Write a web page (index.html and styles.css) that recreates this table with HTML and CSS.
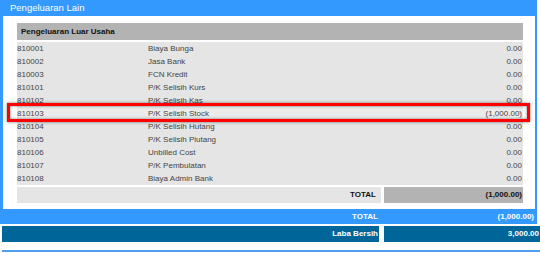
FILE: index.html
```html
<!DOCTYPE html>
<html lang="id">
<head>
    <meta charset="UTF-8">
    <meta name="viewport" content="width=device-width, initial-scale=1.0">
    <title>Laporan Laba Rugi | Pengeluaran Lain</title>
    <link rel="stylesheet" href="styles.css">
</head>
<body>
    <div class="panel">
        <div class="panel-heading">Pengeluaran Lain</div>
        <div class="panel-body">
            <div class="group-title">Pengeluaran Luar Usaha</div>
            <div class="acc-list">
                <div class="acc-row"><span>810001</span><span>Biaya Bunga</span><span class="amt">0.00</span></div>
                <div class="acc-row"><span>810002</span><span>Jasa Bank</span><span class="amt">0.00</span></div>
                <div class="acc-row"><span>810003</span><span>FCN Kredit</span><span class="amt">0.00</span></div>
                <div class="acc-row"><span>810101</span><span>P/K Selisih Kurs</span><span class="amt">0.00</span></div>
                <div class="acc-row"><span>810102</span><span>P/K Selisih Kas</span><span class="amt">0.00</span></div>
                <div class="acc-row marked"><span>810103</span><span>P/K Selisih Stock</span><span class="amt">(1,000.00)</span></div>
                <div class="acc-row"><span>810104</span><span>P/K Selisih Hutang</span><span class="amt">0.00</span></div>
                <div class="acc-row"><span>810105</span><span>P/K Selisih Piutang</span><span class="amt">0.00</span></div>
                <div class="acc-row"><span>810106</span><span>Unbilled Cost</span><span class="amt">0.00</span></div>
                <div class="acc-row"><span>810107</span><span>P/K Pembulatan</span><span class="amt">0.00</span></div>
                <div class="acc-row"><span>810108</span><span>Biaya Admin Bank</span><span class="amt">0.00</span></div>
            </div>
            <div class="group-total">
                <div class="label">TOTAL</div>
                <div class="value">(1,000.00)</div>
            </div>
        </div>
        <div class="band">
            <div class="label">TOTAL</div>
            <div class="value">(1,000.00)</div>
        </div>
    </div>
    <div class="band net">
        <div class="label">Laba Bersih</div>
        <div class="value">3,000.00</div>
    </div>
    <div class="divider"></div>
</body>
</html>
```

FILE: styles.css
```css
body {
    margin: 0;
    font-family: 'Liberation Sans', Arial, sans-serif;
    font-size: 8px;
    background: #fff;
    color: #444;
}
.panel {
    width: 532px;
    background: #3399ff;
    padding: 0 2px 0 3px;
}
.panel-heading {
    height: 16px;
    line-height: 16px;
    padding-left: 7px;
    color: #fff;
    font-size: 9.5px;
}
.panel-body {
    background: #fff;
    padding: 7px 12px 6px 14px;
}
.group-title {
    background: #b3b3b3;
    color: #111;
    font-weight: bold;
    height: 17px;
    line-height: 17px;
    padding-left: 4px;
    margin-bottom: 2px;
}
.acc-list {
    background: #e5e5e5;
}
.acc-row {
    display: grid;
    grid-template-columns: 131px 1fr 120px;
    height: 13px;
    line-height: 13px;
    padding-right: 1px;
}
.acc-row .amt {
    text-align: right;
}
/* highlighted account */
.acc-row.marked {
    position: relative;
    background: #ebebeb;
}
.acc-row.marked::after {
    content: '';
    position: absolute;
    top: -4px;
    left: -10px;
    right: -7px;
    bottom: -2px;
    border: 3px solid #f00;
    box-shadow: 0 0 3px rgba(0, 0, 0, 0.5), inset 0 0 3px rgba(0, 0, 0, 0.5);
}
.group-total {
    display: grid;
    grid-template-columns: 1fr 139px;
    column-gap: 3px;
    margin-top: 2px;
    height: 16px;
    line-height: 16px;
    font-weight: bold;
    color: #111;
}
.group-total .label {
    background: #e5e5e5;
    text-align: right;
    padding-right: 5px;
}
.group-total .value {
    background: #b3b3b3;
    text-align: right;
    padding-right: 1px;
}
.band {
    display: grid;
    grid-template-columns: 379px 1fr;
    column-gap: 5px;
    margin-left: -3px;
    margin-right: -2px;
    height: 15px;
    line-height: 15px;
    font-weight: bold;
    color: #fff;
}
.band .label {
    text-align: right;
    padding-right: 1px;
}
.band .value {
    text-align: right;
    padding-right: 3px;
}
.band.net {
    background: #fff;
    grid-template-columns: 377px 1fr;
    margin: 2px 0 0 2px;
    height: 16px;
    line-height: 16px;
}
.band.net .label, .band.net .value {
    background: #006699;
}
.band.net .value {
    padding-right: 1px;
}
.divider {
    height: 2px;
    margin: 8px 0 0 2px;
    background: #4f9fef;
}
```
